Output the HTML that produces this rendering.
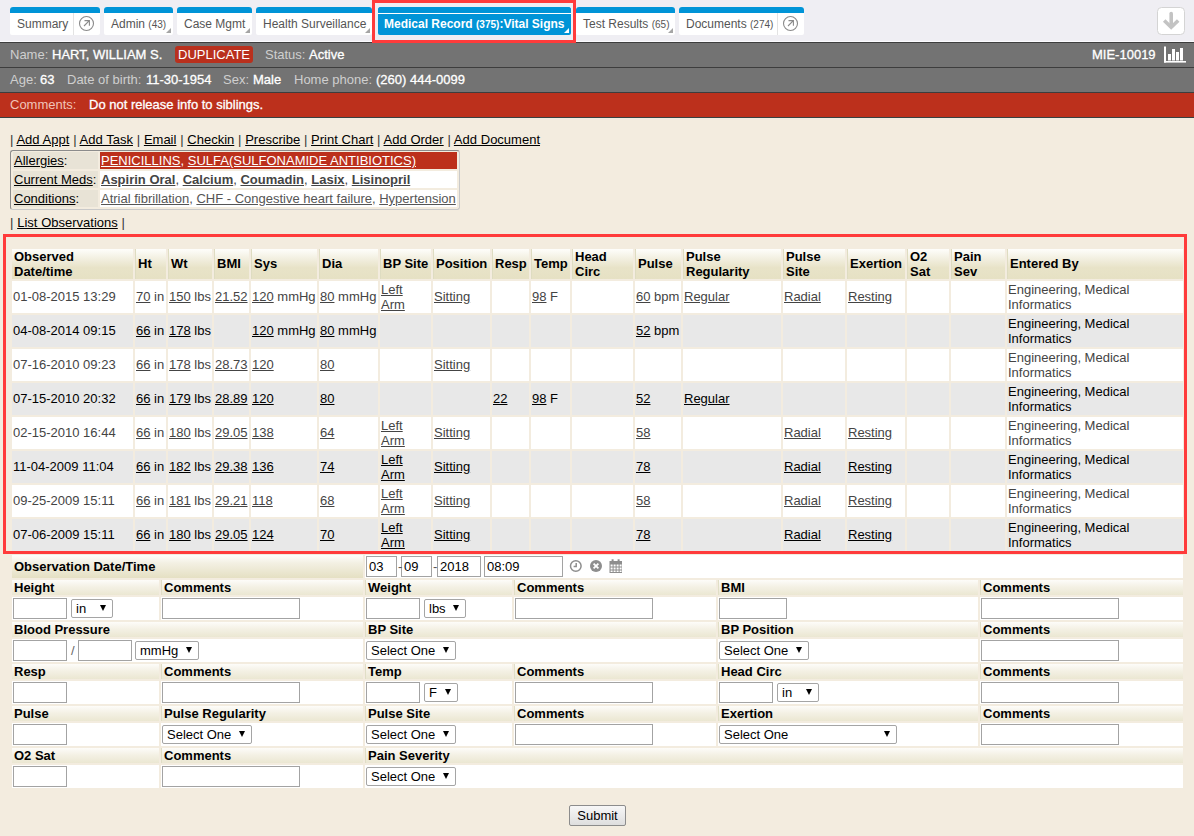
<!DOCTYPE html>
<html><head><meta charset="utf-8">
<style>
*{box-sizing:border-box}
html,body{margin:0;padding:0}
body{width:1194px;height:836px;overflow:hidden;background:#f3ecdf;font-family:"Liberation Sans",sans-serif;font-size:13px;color:#000;position:relative}
.abs{position:absolute}
#strip{position:absolute;left:0;top:0;width:1194px;height:41px;background:#efeef3}
#wline{position:absolute;left:0;top:41px;width:1194px;height:1px;background:#fbfbfe}
.tab{position:absolute;top:7px;height:28px;background:#fff;border-radius:3px 3px 2px 2px;overflow:hidden;font-size:12px;color:#555;white-space:nowrap}
.tab:before{content:"";position:absolute;left:0;top:0;right:0;height:6px;background:#0094d7}
.tab .t{position:absolute;top:6px;height:22px;line-height:22px}
.tab small{font-size:10px}
.tri{position:absolute;right:2px;bottom:2px;width:0;height:0;border-left:5px solid transparent;border-bottom:5px solid #a5a5a5}
.tab .div{position:absolute;top:6px;height:22px;width:1px;background:#e3e3e3}
.circ{position:absolute;width:15px;height:15px;border:1px solid #8a8a8a;border-radius:50%}
.hdr{position:absolute;left:0;width:1194px;height:24px;background:#737373;color:#fff;line-height:24px;white-space:nowrap;-webkit-text-stroke:0.3px currentColor}
.hl{position:absolute;left:0;width:1194px;height:1px;background:#3d3d3d}
.lab{color:#cfcfcf;-webkit-text-stroke:0}
.hdr span.abs{top:0}

.lnk{position:absolute;white-space:nowrap;line-height:15px;word-spacing:0.15px}
.lnk a{color:#000;text-decoration:underline}
.lnk .p{color:#333}
#alg{position:absolute;left:10px;top:150px;width:450px;height:60px;border:1px solid;border-color:#8c8c8c #c9c9c9 #c9c9c9 #8c8c8c;border-radius:3px}
.ar{position:absolute;height:17px;line-height:17px;white-space:nowrap;overflow:hidden}
.ar a{color:inherit;text-decoration:underline}
table.obs{position:absolute;left:10px;top:247px;width:1175px;border-spacing:2px;border-collapse:separate;table-layout:fixed}
table.obs th{height:30px;padding:0 2px 1px 2px;text-align:left;font-weight:bold;line-height:15px;background:linear-gradient(#fefefb 0%,#f3f0e2 30%,#e8e3c8 62%,#e6e1c4 100%);vertical-align:middle;white-space:normal}
table.obs td{height:32px;padding:0 1px 2px 1px;line-height:15px;vertical-align:middle;background:#fff;color:#444;white-space:normal}
table.obs tr.g td{background:#e8e8e8;color:#000}
table.obs a{color:inherit;text-decoration:underline}
table.obs th.m{padding:0 2px}
table.obs th+th{border-left:1px solid #dedcc1;padding-left:2px}
table.obs td.m{padding:1px}

.fh{position:absolute;height:15px;line-height:15px;font-weight:bold;padding-left:2px;white-space:nowrap;background:linear-gradient(#fdfcf9 0%,#f4f1e5 45%,#ebe7d2 100%)}
.fh.bl{border-left:1px solid #e0dec6;padding-left:2px}
.fc{position:absolute;height:23px;background:#fff}
.inp{position:absolute;height:21px;border:1px solid #a3a3a3;background:#fff;line-height:19px;padding-left:2px;white-space:nowrap}
.sel{position:absolute;height:19px;border:1px solid #a5a5a5;border-radius:2px;background:#fff;line-height:17px;padding-left:4px;white-space:nowrap}
.sel:after{content:"";position:absolute;right:6px;top:5px;width:0;height:0;border-left:3.5px solid transparent;border-right:3.5px solid transparent;border-top:6px solid #000}
</style></head><body>
<div id="strip"></div><div id="wline"></div>
<!-- tabs -->
<div class="tab" style="left:10px;width:90px"><span class="t" style="left:7px">Summary</span><span class="div" style="left:63px"></span></div>
<div class="tab" style="left:104px;width:69px"><span class="t" style="left:7px">Admin <small>(43)</small></span><span class="tri"></span></div>
<div class="tab" style="left:177px;width:75px"><span class="t" style="left:7px">Case Mgmt</span><span class="tri"></span></div>
<div class="tab" style="left:256px;width:116px"><span class="t" style="left:7px">Health Surveillance</span><span class="tri"></span></div>
<div class="tab" style="left:378px;width:193px;background:#0094d7;color:#fff;font-weight:bold"><span style="position:absolute;left:0;right:0;top:6px;height:1px;background:#fff"></span><span class="t" style="left:6px;top:7px;height:21px;line-height:21px">Medical Record <small>(375)</small>:Vital Signs</span><span class="tri" style="border-bottom-color:#fff"></span></div>
<div class="tab" style="left:576px;width:99px"><span class="t" style="left:7px">Test Results <small>(65)</small></span><span class="tri"></span></div>
<div class="tab" style="left:679px;width:125px"><span class="t" style="left:7px">Documents <small>(274)</small></span><span class="div" style="left:98px"></span></div>


<!-- red highlight around active tab -->


<!-- header rows -->
<div class="hl" style="top:42px"></div>
<div class="hdr" style="top:43px">
 <span class="abs lab" style="left:10px">Name:</span><span class="abs" style="left:52px">HART, WILLIAM S.</span>
 <span class="abs" style="left:175px;top:3px;width:78px;height:17px;background:#b9301d;border-radius:3px;line-height:17px;padding-left:3px;-webkit-text-stroke:0">DUPLICATE</span>
 <span class="abs lab" style="left:265px">Status:</span><span class="abs" style="left:309px">Active</span>
 <span class="abs" style="left:1092px">MIE-10019</span>
</div>
<div class="hl" style="top:67px"></div>
<div class="hdr" style="top:68px">
 <span class="abs lab" style="left:10px">Age:</span><span class="abs" style="left:40px">63</span>
 <span class="abs lab" style="left:67px">Date of birth:</span><span class="abs" style="left:146px">11-30-1954</span>
 <span class="abs lab" style="left:223px">Sex:</span><span class="abs" style="left:253px">Male</span>
 <span class="abs lab" style="left:294px">Home phone:</span><span class="abs" style="left:376px">(260) 444-0099</span>
</div>
<div class="hl" style="top:92px"></div>
<div class="hdr" style="top:93px;background:#bc301c">
 <span class="abs" style="left:10px;color:#f1c4b8;-webkit-text-stroke:0">Comments:</span><span class="abs" style="left:89px">Do not release info to siblings.</span>
</div>
<div class="hl" style="top:117px;background:#384040"></div>


<div class="lnk" style="left:10px;top:132px"><span class="p">|</span> <a>Add Appt</a> <span class="p">|</span> <a>Add Task</a> <span class="p">|</span> <a>Email</a> <span class="p">|</span> <a>Checkin</a> <span class="p">|</span> <a>Prescribe</a> <span class="p">|</span> <a>Print Chart</a> <span class="p">|</span> <a>Add Order</a> <span class="p">|</span> <a>Add Document</a></div>
<div id="alg">
 <div class="ar" style="left:2px;top:1px;width:85px;background:#e8e3d6;padding-left:1px"><a>Allergies</a>:</div>
 <div class="ar" style="left:89px;top:1px;width:357px;background:#bc301c;color:#fff;padding-left:1px"><a>PENICILLINS</a>, <a>SULFA(SULFONAMIDE ANTIBIOTICS)</a></div>
 <div class="ar" style="left:2px;top:20px;width:85px;background:#e8e3d6;padding-left:1px"><a>Current Meds</a>:</div>
 <div class="ar" style="left:89px;top:20px;width:357px;background:#fff;color:#444;font-weight:bold;padding-left:1px"><a>Aspirin Oral</a><b style="font-weight:normal">, </b><a>Calcium</a><b style="font-weight:normal">, </b><a>Coumadin</a><b style="font-weight:normal">, </b><a>Lasix</a><b style="font-weight:normal">, </b><a>Lisinopril</a></div>
 <div class="ar" style="left:2px;top:39px;width:85px;background:#e8e3d6;padding-left:1px"><a>Conditions</a>:</div>
 <div class="ar" style="left:89px;top:39px;width:357px;background:#fff;color:#555;padding-left:1px"><a>Atrial fibrillation</a>, <a>CHF - Congestive heart failure</a>, <a>Hypertension</a></div>
</div>
<div class="lnk" style="left:10px;top:215px"><span class="p">|</span> <a>List Observations</a> <span class="p">|</span></div>
<table class="obs"><colgroup><col style="width:121px"><col style="width:31px"><col style="width:44px"><col style="width:35px"><col style="width:66px"><col style="width:59px"><col style="width:51px"><col style="width:57px"><col style="width:37px"><col style="width:39px"><col style="width:61px"><col style="width:46px"><col style="width:98px"><col style="width:62px"><col style="width:58px"><col style="width:42px"><col style="width:54px"><col style="width:176px"></colgroup>
<tr><th class="m">Observed Date/time</th><th>Ht</th><th>Wt</th><th>BMI</th><th>Sys</th><th>Dia</th><th>BP Site</th><th>Position</th><th>Resp</th><th>Temp</th><th class="m">Head Circ</th><th>Pulse</th><th class="m">Pulse Regularity</th><th class="m">Pulse Site</th><th>Exertion</th><th class="m">O2 Sat</th><th class="m">Pain Sev</th><th>Entered By</th></tr>
<tr><td>01-08-2015 13:29</td><td><a>70</a> in</td><td><a>150</a> lbs</td><td><a>21.52</a></td><td><a>120</a> mmHg</td><td><a>80</a> mmHg</td><td class="m"><a>Left</a><br><a>Arm</a></td><td><a>Sitting</a></td><td></td><td><a>98</a> F</td><td></td><td><a>60</a> bpm</td><td><a>Regular</a></td><td><a>Radial</a></td><td><a>Resting</a></td><td></td><td></td><td class="m">Engineering, Medical Informatics</td></tr>
<tr class="g"><td>04-08-2014 09:15</td><td><a>66</a> in</td><td><a>178</a> lbs</td><td></td><td><a>120</a> mmHg</td><td><a>80</a> mmHg</td><td></td><td></td><td></td><td></td><td></td><td><a>52</a> bpm</td><td></td><td></td><td></td><td></td><td></td><td class="m">Engineering, Medical Informatics</td></tr>
<tr><td>07-16-2010 09:23</td><td><a>66</a> in</td><td><a>178</a> lbs</td><td><a>28.73</a></td><td><a>120</a></td><td><a>80</a></td><td></td><td><a>Sitting</a></td><td></td><td></td><td></td><td></td><td></td><td></td><td></td><td></td><td></td><td class="m">Engineering, Medical Informatics</td></tr>
<tr class="g"><td>07-15-2010 20:32</td><td><a>66</a> in</td><td><a>179</a> lbs</td><td><a>28.89</a></td><td><a>120</a></td><td><a>80</a></td><td></td><td></td><td><a>22</a></td><td><a>98</a> F</td><td></td><td><a>52</a></td><td><a>Regular</a></td><td></td><td></td><td></td><td></td><td class="m">Engineering, Medical Informatics</td></tr>
<tr><td>02-15-2010 16:44</td><td><a>66</a> in</td><td><a>180</a> lbs</td><td><a>29.05</a></td><td><a>138</a></td><td><a>64</a></td><td class="m"><a>Left</a><br><a>Arm</a></td><td><a>Sitting</a></td><td></td><td></td><td></td><td><a>58</a></td><td></td><td><a>Radial</a></td><td><a>Resting</a></td><td></td><td></td><td class="m">Engineering, Medical Informatics</td></tr>
<tr class="g"><td>11-04-2009 11:04</td><td><a>66</a> in</td><td><a>182</a> lbs</td><td><a>29.38</a></td><td><a>136</a></td><td><a>74</a></td><td class="m"><a>Left</a><br><a>Arm</a></td><td><a>Sitting</a></td><td></td><td></td><td></td><td><a>78</a></td><td></td><td><a>Radial</a></td><td><a>Resting</a></td><td></td><td></td><td class="m">Engineering, Medical Informatics</td></tr>
<tr><td>09-25-2009 15:11</td><td><a>66</a> in</td><td><a>181</a> lbs</td><td><a>29.21</a></td><td><a>118</a></td><td><a>68</a></td><td class="m"><a>Left</a><br><a>Arm</a></td><td><a>Sitting</a></td><td></td><td></td><td></td><td><a>58</a></td><td></td><td><a>Radial</a></td><td><a>Resting</a></td><td></td><td></td><td class="m">Engineering, Medical Informatics</td></tr>
<tr class="g"><td>07-06-2009 15:11</td><td><a>66</a> in</td><td><a>180</a> lbs</td><td><a>29.05</a></td><td><a>124</a></td><td><a>70</a></td><td class="m"><a>Left</a><br><a>Arm</a></td><td><a>Sitting</a></td><td></td><td></td><td></td><td><a>78</a></td><td></td><td><a>Radial</a></td><td><a>Resting</a></td><td></td><td></td><td class="m">Engineering, Medical Informatics</td></tr>
</table>
<div class="fh" style="left:12px;top:555px;width:351px;height:23px;line-height:23px;background:linear-gradient(#fefefc 0%,#f3f0e3 35%,#e5e0c3 100%)">Observation Date/Time</div>
<div class="fc" style="left:365px;top:555px;width:818px"></div>
<div class="inp" style="left:366px;top:556px;width:31px">03</div>
<div class="inp" style="left:401px;top:556px;width:31px">09</div>
<div class="inp" style="left:437px;top:556px;width:44px">2018</div>
<div class="inp" style="left:484px;top:556px;width:79px">08:09</div>
<span class="abs" style="left:398px;top:559px;line-height:15px;color:#555">-</span><span class="abs" style="left:433px;top:559px;line-height:15px;color:#555">-</span>
<div class="fh" style="left:12px;top:580px;width:147px">Height</div>
<div class="fh bl" style="left:161px;top:580px;width:202px">Comments</div>
<div class="fh bl" style="left:365px;top:580px;width:147px">Weight</div>
<div class="fh bl" style="left:514px;top:580px;width:202px">Comments</div>
<div class="fh bl" style="left:718px;top:580px;width:260px">BMI</div>
<div class="fh bl" style="left:980px;top:580px;width:203px">Comments</div>
<div class="fc" style="left:12px;top:597px;width:147px"></div>
<div class="fc" style="left:161px;top:597px;width:202px"></div>
<div class="fc" style="left:365px;top:597px;width:147px"></div>
<div class="fc" style="left:514px;top:597px;width:202px"></div>
<div class="fc" style="left:718px;top:597px;width:260px"></div>
<div class="fc" style="left:980px;top:597px;width:203px"></div>
<div class="inp" style="left:13px;top:598px;width:54px"></div>
<div class="sel" style="left:71px;top:599px;width:42px">in</div>
<div class="inp" style="left:162px;top:598px;width:138px"></div>
<div class="inp" style="left:366px;top:598px;width:54px"></div>
<div class="sel" style="left:424px;top:599px;width:42px">lbs</div>
<div class="inp" style="left:515px;top:598px;width:138px"></div>
<div class="inp" style="left:719px;top:598px;width:68px"></div>
<div class="inp" style="left:981px;top:598px;width:138px"></div>
<div class="fh" style="left:12px;top:622px;width:351px">Blood Pressure</div>
<div class="fh bl" style="left:365px;top:622px;width:351px">BP Site</div>
<div class="fh bl" style="left:718px;top:622px;width:260px">BP Position</div>
<div class="fh bl" style="left:980px;top:622px;width:203px">Comments</div>
<div class="fc" style="left:12px;top:639px;width:351px"></div>
<div class="fc" style="left:365px;top:639px;width:351px"></div>
<div class="fc" style="left:718px;top:639px;width:260px"></div>
<div class="fc" style="left:980px;top:639px;width:203px"></div>
<div class="inp" style="left:13px;top:640px;width:54px"></div>
<div class="inp" style="left:78px;top:640px;width:54px"></div>
<div class="sel" style="left:135px;top:641px;width:64px">mmHg</div>
<div class="sel" style="left:366px;top:641px;width:90px">Select One</div>
<div class="sel" style="left:719px;top:641px;width:90px">Select One</div>
<div class="inp" style="left:981px;top:640px;width:138px"></div>
<span class="abs" style="left:71px;top:643px;line-height:15px;color:#666">/</span>
<div class="fh" style="left:12px;top:664px;width:147px">Resp</div>
<div class="fh bl" style="left:161px;top:664px;width:202px">Comments</div>
<div class="fh bl" style="left:365px;top:664px;width:147px">Temp</div>
<div class="fh bl" style="left:514px;top:664px;width:202px">Comments</div>
<div class="fh bl" style="left:718px;top:664px;width:260px">Head Circ</div>
<div class="fh bl" style="left:980px;top:664px;width:203px">Comments</div>
<div class="fc" style="left:12px;top:681px;width:147px"></div>
<div class="fc" style="left:161px;top:681px;width:202px"></div>
<div class="fc" style="left:365px;top:681px;width:147px"></div>
<div class="fc" style="left:514px;top:681px;width:202px"></div>
<div class="fc" style="left:718px;top:681px;width:260px"></div>
<div class="fc" style="left:980px;top:681px;width:203px"></div>
<div class="inp" style="left:13px;top:682px;width:54px"></div>
<div class="inp" style="left:162px;top:682px;width:138px"></div>
<div class="inp" style="left:366px;top:682px;width:54px"></div>
<div class="sel" style="left:424px;top:683px;width:34px">F</div>
<div class="inp" style="left:515px;top:682px;width:138px"></div>
<div class="inp" style="left:719px;top:682px;width:54px"></div>
<div class="sel" style="left:777px;top:683px;width:42px">in</div>
<div class="inp" style="left:981px;top:682px;width:138px"></div>
<div class="fh" style="left:12px;top:706px;width:147px">Pulse</div>
<div class="fh bl" style="left:161px;top:706px;width:202px">Pulse Regularity</div>
<div class="fh bl" style="left:365px;top:706px;width:147px">Pulse Site</div>
<div class="fh bl" style="left:514px;top:706px;width:202px">Comments</div>
<div class="fh bl" style="left:718px;top:706px;width:260px">Exertion</div>
<div class="fh bl" style="left:980px;top:706px;width:203px">Comments</div>
<div class="fc" style="left:12px;top:723px;width:147px"></div>
<div class="fc" style="left:161px;top:723px;width:202px"></div>
<div class="fc" style="left:365px;top:723px;width:147px"></div>
<div class="fc" style="left:514px;top:723px;width:202px"></div>
<div class="fc" style="left:718px;top:723px;width:260px"></div>
<div class="fc" style="left:980px;top:723px;width:203px"></div>
<div class="inp" style="left:13px;top:724px;width:54px"></div>
<div class="sel" style="left:162px;top:725px;width:90px">Select One</div>
<div class="sel" style="left:366px;top:725px;width:90px">Select One</div>
<div class="inp" style="left:515px;top:724px;width:138px"></div>
<div class="sel" style="left:719px;top:725px;width:178px">Select One</div>
<div class="inp" style="left:981px;top:724px;width:138px"></div>
<div class="fh" style="left:12px;top:748px;width:147px">O2 Sat</div>
<div class="fh bl" style="left:161px;top:748px;width:202px">Comments</div>
<div class="fh bl" style="left:365px;top:748px;width:818px">Pain Severity</div>
<div class="fc" style="left:12px;top:765px;width:147px"></div>
<div class="fc" style="left:161px;top:765px;width:202px"></div>
<div class="fc" style="left:365px;top:765px;width:818px"></div>
<div class="inp" style="left:13px;top:766px;width:54px"></div>
<div class="inp" style="left:162px;top:766px;width:138px"></div>
<div class="sel" style="left:366px;top:767px;width:90px">Select One</div>
<div class="abs" style="left:569px;top:805px;width:57px;height:21px;border:1px solid #8c8c8c;border-radius:2px;background:linear-gradient(#f7f7f7,#dedede);text-align:center;line-height:19px">Submit</div>
<svg class="abs" style="left:0;top:0;pointer-events:none" width="1194" height="836" viewBox="0 0 1194 836">
<g fill="none" stroke="#8a8a8a" stroke-width="1.1">
<circle cx="86.5" cy="23.5" r="7"/><path d="M84 26 L89.3 20.7 M84.5 20.6 H89.4 V25.8"/>
<circle cx="790.5" cy="23.5" r="7"/><path d="M788 26 L793.3 20.7 M788.5 20.6 H793.4 V25.8"/>
</g>
<rect x="1157.5" y="7.5" width="27" height="27" rx="4" fill="#fff" stroke="#d4d4d4"/>
<g fill="none" stroke="#c3c3c3" stroke-width="3.6" stroke-linecap="round"><path d="M1171.2 13.5 V26"/><path d="M1164.2 20.5 L1171.2 27.3 L1178.2 20.5" stroke-linejoin="miter" stroke-linecap="butt"/></g>
<g fill="#fff"><rect x="1164" y="46.5" width="2" height="16"/><rect x="1164" y="61" width="22" height="1.6"/>
<rect x="1168" y="54" width="3" height="6.5"/><rect x="1172" y="49" width="3" height="11.5"/><rect x="1176" y="52" width="3" height="8.5"/><rect x="1180" y="48" width="3" height="12.5"/></g>
<g fill="none" stroke="#8e8e8e" stroke-width="1.5"><circle cx="575.8" cy="566" r="5.3"/><path d="M576.2 563 V566.5 H573.6"/></g>
<circle cx="596" cy="566" r="6" fill="#8e8e8e"/><path d="M593.6 563.6 L598.4 568.4 M598.4 563.6 L593.6 568.4" stroke="#fff" stroke-width="1.8"/>
<g fill="#8e8e8e"><rect x="609.5" y="561" width="12.5" height="12"/><rect x="611.6" y="559.3" width="2" height="3"/><rect x="617.6" y="559.3" width="2" height="3"/></g>
<g fill="#fff">
<rect x="610.6" y="564.5" width="2" height="2"/><rect x="613.6" y="564.5" width="2" height="2"/><rect x="616.6" y="564.5" width="2" height="2"/><rect x="619.6" y="564.5" width="2" height="2"/>
<rect x="610.6" y="567.5" width="2" height="2"/><rect x="613.6" y="567.5" width="2" height="2"/><rect x="616.6" y="567.5" width="2" height="2"/><rect x="619.6" y="567.5" width="2" height="2"/>
<rect x="610.6" y="570.5" width="2" height="1.5"/><rect x="613.6" y="570.5" width="2" height="1.5"/><rect x="616.6" y="570.5" width="2" height="1.5"/><rect x="619.6" y="570.5" width="2" height="1.5"/>
</g>
<rect x="4.5" y="235.5" width="1181" height="317" fill="none" stroke="#ff3b3b" stroke-width="3"/>
<rect x="373.5" y="1.5" width="201" height="40" fill="none" stroke="#ff3b3b" stroke-width="3"/>
</svg>
</body></html>
